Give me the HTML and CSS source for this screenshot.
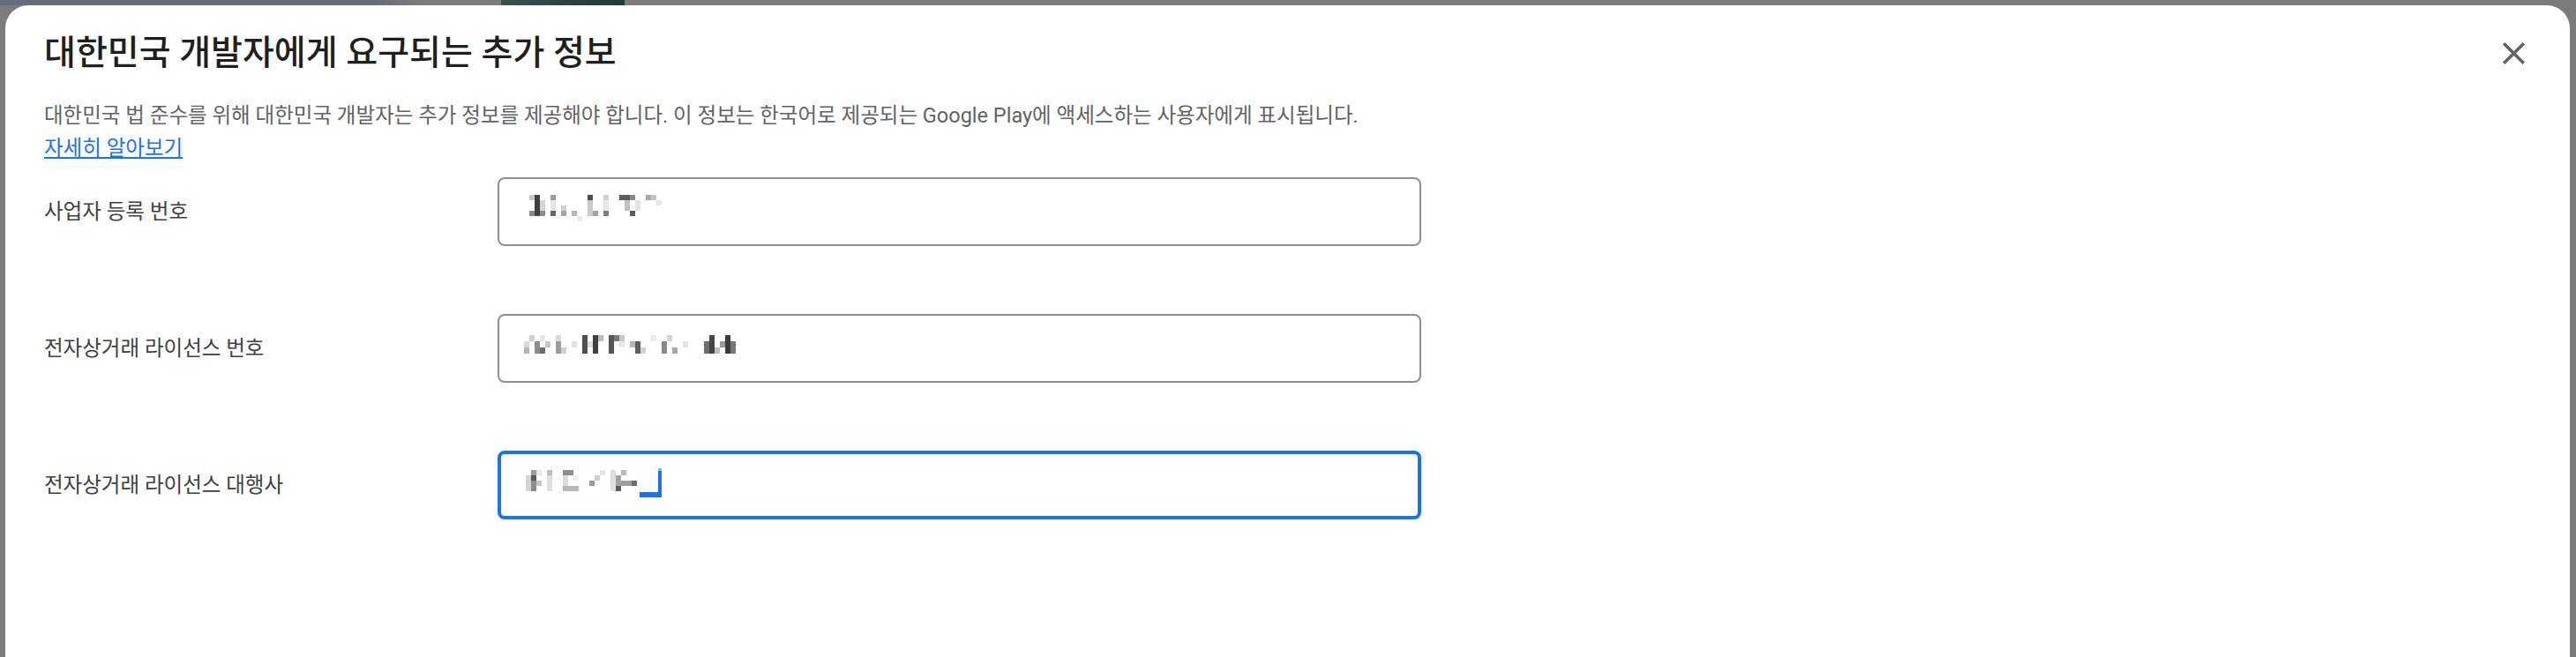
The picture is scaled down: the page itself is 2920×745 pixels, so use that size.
FILE: index.html
```html
<!DOCTYPE html>
<html lang="ko">
<head>
<meta charset="utf-8">
<title>대한민국 개발자에게 요구되는 추가 정보</title>
<link rel="stylesheet" href="styles.css">
</head>
<body>
<div class="strip"><span class="strip-blue"></span><span class="strip-gap"></span><span class="strip-photo"></span></div>
<div class="dialog">
  <div class="head">
    <h1 class="title">대한민국 개발자에게 요구되는 추가 정보</h1>
    <button class="close" aria-label="닫기">
      <svg width="43" height="43" viewBox="0 0 24 24"><path d="M19 6.41L17.59 5 12 10.59 6.41 5 5 6.41 10.59 12 5 17.59 6.41 19 12 13.41 17.59 19 19 17.59 13.41 12z" fill="#5f6368"/></svg>
    </button>
  </div>
  <p class="desc">대한민국 법 준수를 위해 대한민국 개발자는 추가 정보를 제공해야 합니다. 이 정보는 한국어로 제공되는 Google Play에 액세스하는 사용자에게 표시됩니다.<br><a class="link" href="#">자세히 알아보기</a></p>
  <div class="form">
    <div class="row">
      <span class="label">사업자 등록 번호</span>
      <div class="field">
        <svg width="170" height="30" viewBox="0 0 170 30">
          <rect x="6" y="0" width="6" height="6" fill="#c8c8c8"/>
          <rect x="6" y="18" width="6" height="6" fill="#8a8a8a"/>
          <rect x="12" y="0" width="6" height="24" fill="#3f3f3f"/>
          <rect x="18" y="6" width="6" height="12" fill="#d6d6d6"/>
          <rect x="18" y="18" width="6" height="6" fill="#8c8c8c"/>
          <rect x="30" y="0" width="6" height="6" fill="#9b9b9b"/>
          <rect x="30" y="6" width="6" height="12" fill="#e6e6e6"/>
          <rect x="30" y="18" width="6" height="6" fill="#6a6a6a"/>
          <rect x="42" y="12" width="6" height="6" fill="#d0d0d0"/>
          <rect x="42" y="18" width="6" height="6" fill="#a5a5a5"/>
          <rect x="54" y="18" width="6" height="6" fill="#b8b8b8"/>
          <rect x="60" y="24" width="6" height="6" fill="#ececec"/>
          <rect x="72" y="0" width="6" height="6" fill="#4d4d4d"/>
          <rect x="72" y="6" width="6" height="18" fill="#c9c9c9"/>
          <rect x="78" y="18" width="6" height="6" fill="#9f9f9f"/>
          <rect x="90" y="0" width="6" height="6" fill="#cfcfcf"/>
          <rect x="90" y="6" width="6" height="12" fill="#e8e8e8"/>
          <rect x="90" y="18" width="6" height="6" fill="#7d7d7d"/>
          <rect x="108" y="0" width="12" height="6" fill="#5c5c5c"/>
          <rect x="114" y="6" width="6" height="12" fill="#c0c0c0"/>
          <rect x="120" y="0" width="6" height="6" fill="#8a8a8a"/>
          <rect x="120" y="18" width="6" height="6" fill="#5a5a5a"/>
          <rect x="126" y="6" width="6" height="12" fill="#e3e3e3"/>
          <rect x="138" y="0" width="6" height="6" fill="#a9a9a9"/>
          <rect x="144" y="0" width="6" height="6" fill="#c6c6c6"/>
          <rect x="150" y="6" width="6" height="6" fill="#e6e6e6"/>
        </svg>
      </div>
    </div>
    <div class="row">
      <span class="label">전자상거래 라이선스 번호</span>
      <div class="field">
        <svg width="250" height="30" viewBox="0 0 250 30">
          <rect x="0" y="11" width="6" height="7" fill="#d9d9d9"/>
          <rect x="0" y="18" width="6" height="7" fill="#b5b5b5"/>
          <rect x="6" y="4" width="6" height="7" fill="#cfcfcf"/>
          <rect x="12" y="11" width="6" height="14" fill="#8e8e8e"/>
          <rect x="18" y="4" width="6" height="7" fill="#e6e6e6"/>
          <rect x="18" y="18" width="6" height="7" fill="#6b6b6b"/>
          <rect x="24" y="11" width="6" height="7" fill="#c7c7c7"/>
          <rect x="36" y="4" width="6" height="7" fill="#dadada"/>
          <rect x="36" y="11" width="6" height="14" fill="#9c9c9c"/>
          <rect x="42" y="18" width="6" height="7" fill="#cfcfcf"/>
          <rect x="54" y="11" width="6" height="7" fill="#e1e1e1"/>
          <rect x="66" y="4" width="6" height="21" fill="#4e4e4e"/>
          <rect x="72" y="11" width="6" height="7" fill="#dedede"/>
          <rect x="78" y="4" width="6" height="21" fill="#3f3f3f"/>
          <rect x="84" y="4" width="6" height="7" fill="#bcbcbc"/>
          <rect x="96" y="4" width="6" height="21" fill="#555555"/>
          <rect x="102" y="4" width="6" height="7" fill="#7a7a7a"/>
          <rect x="108" y="4" width="6" height="7" fill="#c8c8c8"/>
          <rect x="108" y="11" width="6" height="7" fill="#e8e8e8"/>
          <rect x="120" y="11" width="6" height="7" fill="#b8b8b8"/>
          <rect x="126" y="11" width="6" height="14" fill="#5f5f5f"/>
          <rect x="132" y="18" width="6" height="7" fill="#d2d2d2"/>
          <rect x="144" y="4" width="6" height="7" fill="#ececec"/>
          <rect x="156" y="11" width="6" height="14" fill="#888888"/>
          <rect x="162" y="4" width="6" height="7" fill="#d5d5d5"/>
          <rect x="168" y="18" width="6" height="7" fill="#a9a9a9"/>
          <rect x="180" y="11" width="6" height="7" fill="#e2e2e2"/>
          <rect x="204" y="11" width="6" height="14" fill="#6e6e6e"/>
          <rect x="210" y="4" width="6" height="21" fill="#454545"/>
          <rect x="216" y="18" width="6" height="7" fill="#bdbdbd"/>
          <rect x="222" y="11" width="6" height="7" fill="#9a9a9a"/>
          <rect x="228" y="4" width="6" height="21" fill="#3c3c3c"/>
          <rect x="234" y="11" width="6" height="14" fill="#777777"/>
        </svg>
      </div>
    </div>
    <div class="row">
      <span class="label">전자상거래 라이선스 대행사</span>
      <div class="field field-focus">
        <svg width="170" height="34" viewBox="0 0 170 34">
          <rect x="2" y="8" width="6" height="18" fill="#d4d4d4"/>
          <rect x="8" y="2" width="6" height="6" fill="#9a9a9a"/>
          <rect x="8" y="8" width="6" height="6" fill="#5a5a5a"/>
          <rect x="8" y="14" width="6" height="12" fill="#8c8c8c"/>
          <rect x="14" y="2" width="6" height="6" fill="#e6e6e6"/>
          <rect x="14" y="14" width="6" height="6" fill="#c9c9c9"/>
          <rect x="26" y="2" width="6" height="6" fill="#bcbcbc"/>
          <rect x="26" y="8" width="6" height="18" fill="#e0e0e0"/>
          <rect x="44" y="2" width="12" height="6" fill="#8e8e8e"/>
          <rect x="44" y="8" width="6" height="12" fill="#dcdcdc"/>
          <rect x="44" y="20" width="18" height="6" fill="#b8b8b8"/>
          <rect x="56" y="8" width="6" height="6" fill="#efefef"/>
          <rect x="74" y="14" width="6" height="6" fill="#9c9c9c"/>
          <rect x="80" y="8" width="6" height="6" fill="#cfcfcf"/>
          <rect x="86" y="2" width="6" height="6" fill="#e5e5e5"/>
          <rect x="98" y="2" width="6" height="24" fill="#dedede"/>
          <rect x="104" y="8" width="6" height="12" fill="#a3a3a3"/>
          <rect x="104" y="20" width="6" height="6" fill="#5b5b5b"/>
          <rect x="110" y="2" width="6" height="6" fill="#bbbbbb"/>
          <rect x="110" y="14" width="12" height="6" fill="#9d9d9d"/>
          <rect x="122" y="14" width="6" height="6" fill="#6a6a6a"/>
          <rect x="152" y="0" width="4" height="33" fill="#1a73e8"/>
          <rect x="152" y="0" width="4" height="3" fill="#8ab4f8"/>
          <rect x="131" y="27" width="25" height="6" fill="#1a73e8"/>
        </svg>
      </div>
    </div>
  </div>
</div>
</body>
</html>
```
FILE: styles.css
```css
html, body {
  margin: 0;
  padding: 0;
}

body {
  height: 745px;
  overflow: hidden;
  background: #7b7b7b;
  font-family: Roboto, "Noto Sans CJK KR", sans-serif;
}

.strip {
  display: flex;
  height: 6px;
}

.strip-blue {
  width: 470px;
  background: linear-gradient(100deg, #676c7a 0%, #676c7a 90%, #7b7b7b 100%);
}

.strip-gap {
  width: 98px;
}

.strip-photo {
  width: 140px;
  background: linear-gradient(90deg, #3d5052 0%, #2b4443 50%, #23393a 100%);
}

.dialog {
  margin: 0 7px 0 6px;
  height: 780px;
  box-sizing: border-box;
  padding: 32px 42px 0 44px;
  background: #ffffff;
  border-radius: 26px 26px 0 0;
}

.head {
  display: flex;
  align-items: center;
  justify-content: space-between;
  height: 44px;
}

.title {
  margin: 0;
  font-size: 39px;
  line-height: 44px;
  font-weight: 500;
  color: #1f1f1f;
}

.close {
  display: flex;
  width: 43px;
  height: 43px;
  padding: 0;
  border: 0;
  background: none;
}

.desc {
  margin: 31px 0 0;
  font-size: 23.5px;
  line-height: 37px;
  color: #5f6368;
}

.link {
  color: #1a73e8;
  text-decoration: underline;
}

.form {
  display: flex;
  flex-direction: column;
  gap: 77px;
  margin-top: 14px;
}

.row {
  display: grid;
  grid-template-columns: 514px 1047px;
  align-items: center;
}

.label {
  font-size: 23.5px;
  line-height: 30px;
  color: #3c4043;
}

.field {
  height: 78px;
  box-sizing: border-box;
  border: 2px solid #8f8f8f;
  border-radius: 8px;
  padding: 18px 0 0 28px;
}

.field svg {
  display: block;
}

.field-focus {
  border: 4px solid #1a73e8;
  padding: 16px 0 0 26px;
}
```
